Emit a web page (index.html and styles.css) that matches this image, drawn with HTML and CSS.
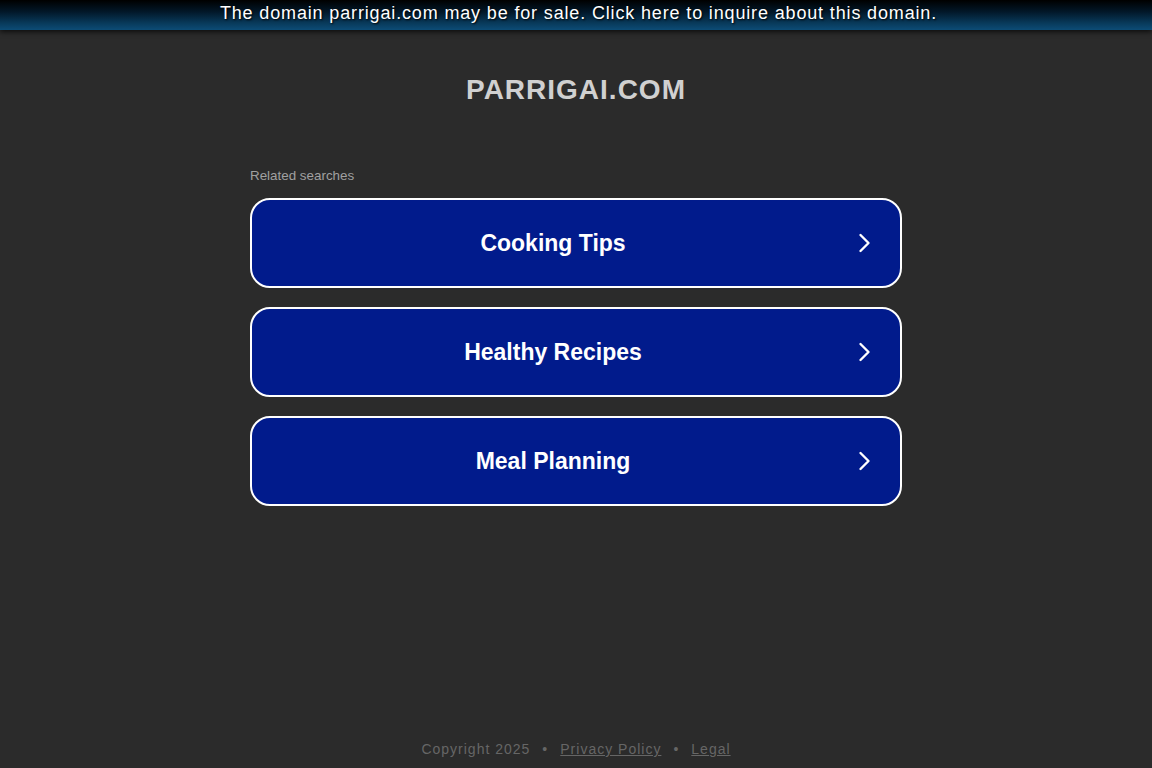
FILE: index.html
```html
<!DOCTYPE html>
<html>
<head>
<meta charset="utf-8">
<link rel="stylesheet" href="styles.css">
</head>
<body>
<div class="banner">The domain parrigai.com may be for sale. Click here to inquire about this domain.</div>
<main class="main">
  <h1 class="title">PARRIGAI.COM</h1>
  <div class="related">
    <div class="related-label">Related searches</div>
    <a class="item" href="#"><span class="item-text">Cooking Tips</span><svg class="chev" viewBox="0 0 20 20" width="20" height="20"><path d="M6.5 2 L14.5 10 L6.5 18" fill="none" stroke="#fff" stroke-width="2.4" stroke-linecap="round" stroke-linejoin="round"/></svg></a>
    <a class="item" href="#"><span class="item-text">Healthy Recipes</span><svg class="chev" viewBox="0 0 20 20" width="20" height="20"><path d="M6.5 2 L14.5 10 L6.5 18" fill="none" stroke="#fff" stroke-width="2.4" stroke-linecap="round" stroke-linejoin="round"/></svg></a>
    <a class="item" href="#"><span class="item-text">Meal Planning</span><svg class="chev" viewBox="0 0 20 20" width="20" height="20"><path d="M6.5 2 L14.5 10 L6.5 18" fill="none" stroke="#fff" stroke-width="2.4" stroke-linecap="round" stroke-linejoin="round"/></svg></a>
  </div>
</main>
<footer class="footer">
  <span>Copyright 2025</span><span class="dot">•</span><a href="#">Privacy Policy</a><span class="dot">•</span><a href="#">Legal</a>
</footer>
</body>
</html>
```
FILE: styles.css
```css
html, body {
  margin: 0;
  padding: 0;
  height: 100%;
}
body {
  background: #2b2b2b;
  font-family: "Liberation Sans", Arial, sans-serif;
  display: flex;
  flex-direction: column;
  min-height: 768px;
}
.banner {
  height: 30px;
  line-height: 27px;
  text-align: center;
  padding-left: 5px;
  color: #fff;
  font-size: 18px;
  letter-spacing: 0.85px;
  background: linear-gradient(to bottom, #000 0%, #02182a 40%, #083858 75%, #0c4c76 100%);
  text-shadow: 1px 1px 2px #000;
  box-shadow: 0 2px 5px rgba(0,0,0,0.7);
}
.main {
  flex: 1;
  display: flex;
  flex-direction: column;
  align-items: center;
}
.title {
  margin: 44px 0 0;
  font-size: 28px;
  font-weight: bold;
  color: #d0d0d0;
  letter-spacing: 1px;
  line-height: 32px;
}
.related {
  width: 652px;
  margin-top: 62px;
}
.related-label {
  font-size: 13.4px;
  color: #a0a0a0;
  line-height: 16px;
  margin-bottom: 14px;
}
.item {
  box-sizing: border-box;
  height: 90px;
  margin-bottom: 19px;
  border: 2px solid #fff;
  border-radius: 20px;
  background: #011b8c;
  display: flex;
  align-items: center;
  justify-content: center;
  position: relative;
  text-decoration: none;
}
.item-text {
  color: #fff;
  font-size: 23px;
  font-weight: bold;
  margin-right: 46px;
}
.chev {
  position: absolute;
  right: 26px;
  top: 33px;
}
.footer {
  text-align: center;
  font-size: 14px;
  color: #666;
  letter-spacing: 1px;
  padding-bottom: 11px;
  line-height: 16px;
}
.footer a {
  color: #666;
}
.dot {
  margin: 0 12px;
}
```
